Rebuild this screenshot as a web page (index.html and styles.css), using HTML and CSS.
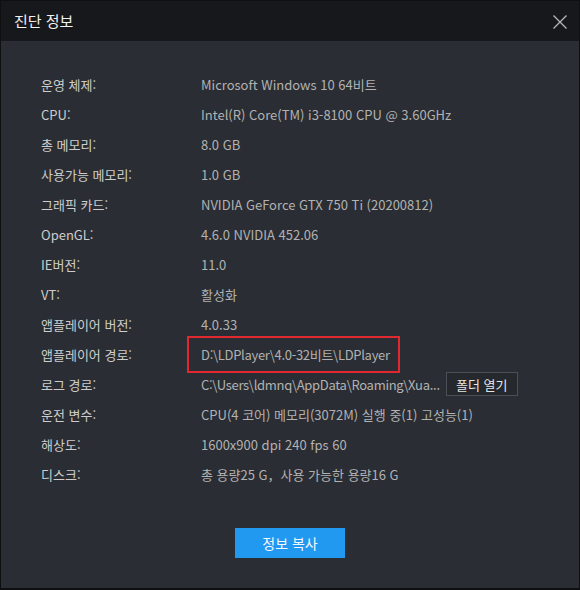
FILE: index.html
```html
<!DOCTYPE html>
<html lang="ko">
<head>
    <meta charset="UTF-8">
    <title>진단 정보</title>
    <link rel="stylesheet" href="styles.css">
</head>
<body>
    <div class="dialog">
        <div class="dialog-header">
            <span class="dialog-title">진단 정보</span>
            <span class="close-button">
                <svg width="14" height="14" viewBox="0 0 14 14">
                    <path d="M0.5 0.5 L13.5 13.5 M13.5 0.5 L0.5 13.5" stroke="#b8b8b8" stroke-width="1.3" fill="none"/>
                </svg>
            </span>
        </div>

        <div class="dialog-body">
            <div class="info-list">
                <div class="info-row"><span class="info-label">운영 체제:</span><span class="info-value">Microsoft Windows 10 64비트</span></div>
                <div class="info-row"><span class="info-label">CPU:</span><span class="info-value">Intel(R) Core(TM) i3-8100 CPU @ 3.60GHz</span></div>
                <div class="info-row"><span class="info-label">총 메모리:</span><span class="info-value">8.0 GB</span></div>
                <div class="info-row"><span class="info-label">사용가능 메모리:</span><span class="info-value">1.0 GB</span></div>
                <div class="info-row"><span class="info-label">그래픽 카드:</span><span class="info-value">NVIDIA GeForce GTX 750 Ti (20200812)</span></div>
                <div class="info-row"><span class="info-label">OpenGL:</span><span class="info-value">4.6.0 NVIDIA 452.06</span></div>
                <div class="info-row"><span class="info-label">IE버전:</span><span class="info-value">11.0</span></div>
                <div class="info-row"><span class="info-label">VT:</span><span class="info-value">활성화</span></div>
                <div class="info-row"><span class="info-label">앱플레이어 버전:</span><span class="info-value">4.0.33</span></div>
                <div class="info-row">
                    <span class="info-label">앱플레이어 경로:</span>
                    <span class="info-value ruta marcado">D:\LDPlayer\4.0-32비트\LDPlayer</span>
                </div>
                <div class="info-row">
                    <span class="info-label">로그 경로:</span>
                    <span class="info-value ruta ruta-log">C:\Users\ldmnq\AppData\Roaming\Xua...</span>
                    <button class="folder-button">폴더 열기</button>
                </div>
                <div class="info-row"><span class="info-label">운전 변수:</span><span class="info-value">CPU(4 코어) 메모리(3072M) 실행 중(1) 고성능(1)</span></div>
                <div class="info-row"><span class="info-label">해상도:</span><span class="info-value">1600x900 dpi 240 fps 60</span></div>
                <div class="info-row"><span class="info-label">디스크:</span><span class="info-value">총 용량25 G，사용 가능한 용량16 G</span></div>
            </div>

            <div class="acciones">
                <button class="copy-button">정보 복사</button>
            </div>
        </div>
    </div>
</body>
</html>
```

FILE: styles.css
```css
/* Ventana de diagnóstico */
body {
    margin: 0;
    background-color: #0f1012;
    font-family: "Noto Sans CJK KR", "Noto Sans", sans-serif;
}

.dialog {
    width: 578px;
    height: 587px;
    border: 1px solid #0e0f11;
    border-bottom-width: 2px;
    background-color: #2a2d33;
    display: flex;
    flex-direction: column;
}

.dialog-header {
    height: 40px;
    background-color: #17181c;
    display: flex;
    align-items: center;
    justify-content: space-between;
    padding: 0 12px 0 13px;
    flex-shrink: 0;
}

.dialog-title {
    color: #f2f2f2;
    font-size: 15px;
    margin-top: -1px;
}

.close-button {
    display: flex;
    width: 14px;
    height: 14px;
    margin-top: 1px;
    cursor: pointer;
}

.dialog-body {
    padding: 28px 0 0 40px;
}

.info-row {
    display: flex;
    align-items: center;
    height: 30px;
    font-size: 13px;
}

.info-label {
    width: 160px;
    flex-shrink: 0;
    color: #cdcdcd;
}

.info-value {
    color: #b2b2b2;
    white-space: nowrap;
}

/* las rutas son algo más estrechas en el original */
.ruta {
    letter-spacing: -0.3px;
}

/* Recuadro rojo sobre la ruta */
.marcado {
    position: relative;
}

.marcado::after {
    content: "";
    position: absolute;
    left: -14px;
    width: 209px;
    top: -9px;
    bottom: -9px;
    border: 2px solid #e0282e;
}

.ruta-log {
    margin-right: 6px;
}

.folder-button {
    width: 72px;
    height: 24px;
    padding: 0;
    border: 1px solid #4b4f58;
    background-color: #25282d;
    color: #e6e6e6;
    font-family: inherit;
    font-size: 13px;
}

.acciones {
    display: flex;
    justify-content: center;
    padding: 39px 40px 0 0;
}

.copy-button {
    width: 110px;
    height: 30px;
    border: none;
    background-color: #2299f0;
    color: #f4f8fc;
    font-family: inherit;
    font-size: 14px;
    cursor: pointer;
}
```
